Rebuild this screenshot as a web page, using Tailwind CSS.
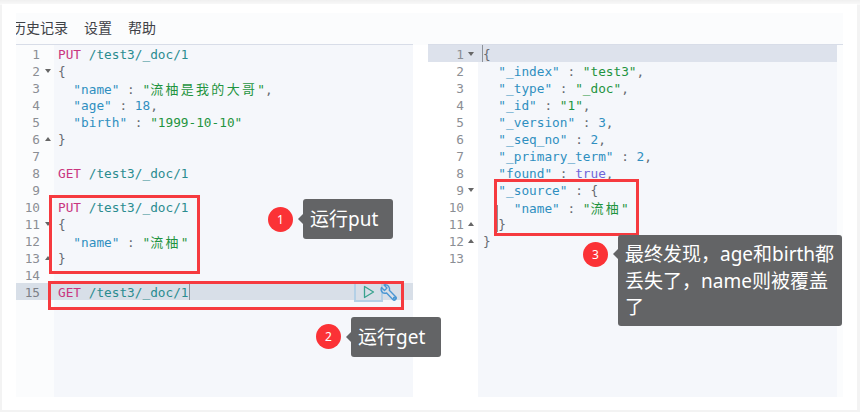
<!DOCTYPE html>
<html lang="zh-CN">
<head>
  <meta charset="UTF-8" />
  <title>Console</title>
  <script src="https://cdn.jsdelivr.net/npm/@tailwindcss/browser@4"></script>
</head>
<body>
  <div class="relative w-[860px] h-[412px] overflow-hidden bg-[#f3f3f3] font-['Noto_Sans','Noto_Sans_CJK_SC',sans-serif]">
    <div class="absolute inset-x-0 top-0 h-[5px] bg-gradient-to-b from-[#f0f0f0] to-[#fafafa]"></div>

    <!-- Panel -->
    <div class="absolute left-[2px] top-[4px] w-[855px] h-[406px] bg-white pt-[9px] px-[14px]">
      <!-- Toolbar -->
      <div class="h-[32px] bg-[#fbfcfd] overflow-hidden flex items-center gap-[16px] pb-[3px] text-[14px] text-[#3f4247]">
        <span class="-ml-[4px] font-['Noto_Sans_CJK_SC',sans-serif]">历史记录</span>
        <span class="font-['Noto_Sans_CJK_SC',sans-serif]">设置</span>
        <span class="font-['Noto_Sans_CJK_SC',sans-serif]">帮助</span>
      </div>

      <div class="flex h-[352px] font-['DejaVu_Sans_Mono',monospace] text-[12.75px] leading-[19px] text-[#666a70]">
        <!-- Request editor -->
        <div class="relative w-[397px] border-t border-[#d8dde8] -mt-px">
          <div class="absolute left-[38px] top-0 bottom-0 w-[359px] bg-[#f5f7fb]"></div>
          <div class="absolute left-0 top-0 bottom-0 w-[38px] bg-[#fbfcfd]"></div>
          <div class="relative">
            <div class="flex h-[17px]"><div class="w-[38px] pr-[14px] text-right text-[#8b8e94]">1</div><div class="pl-[4px] whitespace-pre"><span class="text-[#c9357f]">PUT</span> <span class="text-[#2a8c8f]">/test3/_doc/1</span></div></div>
            <div class="flex h-[17px]"><div class="relative w-[38px] pr-[14px] text-right text-[#8b8e94]">2<svg class="absolute right-[3px] top-[7px]" width="6" height="4" viewBox="0 0 6 4"><path d="M0 0h6L3 4z" fill="#666"/></svg></div><div class="pl-[4px] whitespace-pre">{</div></div>
            <div class="flex h-[17px]"><div class="w-[38px] pr-[14px] text-right text-[#8b8e94]">3</div><div class="pl-[4px] whitespace-pre">  <span class="text-[#2f8fc0]">"name"</span> : <span class="text-[#1f9440]">"<span class="font-['Noto_Sans_CJK_SC',sans-serif] text-[13px] tracking-[2.3px]">流柚是我的大哥</span>"</span>,</div></div>
            <div class="flex h-[17px]"><div class="w-[38px] pr-[14px] text-right text-[#8b8e94]">4</div><div class="pl-[4px] whitespace-pre">  <span class="text-[#2f8fc0]">"age"</span> : <span class="text-[#2f8fc0]">18</span>,</div></div>
            <div class="flex h-[17px]"><div class="w-[38px] pr-[14px] text-right text-[#8b8e94]">5</div><div class="pl-[4px] whitespace-pre">  <span class="text-[#2f8fc0]">"birth"</span> : <span class="text-[#1f9440]">"1999-10-10"</span></div></div>
            <div class="flex h-[17px]"><div class="relative w-[38px] pr-[14px] text-right text-[#8b8e94]">6<svg class="absolute right-[3px] top-[7px]" width="6" height="4" viewBox="0 0 6 4"><path d="M0 4h6L3 0z" fill="#666"/></svg></div><div class="pl-[4px] whitespace-pre">}</div></div>
            <div class="flex h-[17px]"><div class="w-[38px] pr-[14px] text-right text-[#8b8e94]">7</div></div>
            <div class="flex h-[17px]"><div class="w-[38px] pr-[14px] text-right text-[#8b8e94]">8</div><div class="pl-[4px] whitespace-pre"><span class="text-[#c9357f]">GET</span> <span class="text-[#2a8c8f]">/test3/_doc/1</span></div></div>
            <div class="flex h-[17px]"><div class="w-[38px] pr-[14px] text-right text-[#8b8e94]">9</div></div>
            <div class="flex h-[17px]"><div class="w-[38px] pr-[14px] text-right text-[#8b8e94]">10</div><div class="pl-[4px] whitespace-pre"><span class="text-[#c9357f]">PUT</span> <span class="text-[#2a8c8f]">/test3/_doc/1</span></div></div>
            <div class="flex h-[17px]"><div class="relative w-[38px] pr-[14px] text-right text-[#8b8e94]">11<svg class="absolute right-[3px] top-[7px]" width="6" height="4" viewBox="0 0 6 4"><path d="M0 0h6L3 4z" fill="#666"/></svg></div><div class="pl-[4px] whitespace-pre">{</div></div>
            <div class="flex h-[17px]"><div class="w-[38px] pr-[14px] text-right text-[#8b8e94]">12</div><div class="pl-[4px] whitespace-pre">  <span class="text-[#2f8fc0]">"name"</span> : <span class="text-[#1f9440]">"<span class="font-['Noto_Sans_CJK_SC',sans-serif] text-[13px] tracking-[2.3px]">流柚</span>"</span></div></div>
            <div class="flex h-[17px]"><div class="relative w-[38px] pr-[14px] text-right text-[#8b8e94]">13<svg class="absolute right-[3px] top-[7px]" width="6" height="4" viewBox="0 0 6 4"><path d="M0 4h6L3 0z" fill="#666"/></svg></div><div class="pl-[4px] whitespace-pre">}</div></div>
            <div class="flex h-[17px]"><div class="w-[38px] pr-[14px] text-right text-[#8b8e94]">14</div></div>
            <div class="flex h-[17px] bg-[#d8dfe8]"><div class="w-[38px] pr-[14px] text-right text-[#7d8087]">15</div><div class="pl-[4px] whitespace-pre"><span class="text-[#c9357f]">GET</span> <span class="text-[#2a8c8f]">/test3/_doc/1</span></div><div class="w-px h-[17px] bg-[#8d9299]"></div></div>
          </div>
        </div>

        <!-- Response viewer -->
        <div class="relative ml-[15px] w-[415px] border-t border-[#d8dde8] -mt-px bg-[#fbfcfd]">
          <div class="absolute left-[50px] top-0 bottom-0 w-[359px] bg-[#f5f7fb]"></div>
          <div class="absolute left-0 top-0 bottom-0 w-[50px] bg-white"></div>
          <div class="relative w-[409px]">
            <div class="flex h-[17px] bg-[#dde2ec]"><div class="relative w-[50px] pr-[14px] text-right text-[#8b8e94]">1<svg class="absolute right-[4px] top-[7px]" width="6" height="4" viewBox="0 0 6 4"><path d="M0 0h6L3 4z" fill="#666"/></svg></div><div class="w-px h-[17px] ml-[4px] bg-[#8d9299]"></div><div class="whitespace-pre">{</div></div>
            <div class="flex h-[17px]"><div class="w-[50px] pr-[14px] text-right text-[#8b8e94]">2</div><div class="pl-[5px] whitespace-pre">  <span class="text-[#2f8fc0]">"_index"</span> : <span class="text-[#1f9440]">"test3"</span>,</div></div>
            <div class="flex h-[17px]"><div class="w-[50px] pr-[14px] text-right text-[#8b8e94]">3</div><div class="pl-[5px] whitespace-pre">  <span class="text-[#2f8fc0]">"_type"</span> : <span class="text-[#1f9440]">"_doc"</span>,</div></div>
            <div class="flex h-[17px]"><div class="w-[50px] pr-[14px] text-right text-[#8b8e94]">4</div><div class="pl-[5px] whitespace-pre">  <span class="text-[#2f8fc0]">"_id"</span> : <span class="text-[#1f9440]">"1"</span>,</div></div>
            <div class="flex h-[17px]"><div class="w-[50px] pr-[14px] text-right text-[#8b8e94]">5</div><div class="pl-[5px] whitespace-pre">  <span class="text-[#2f8fc0]">"_version"</span> : <span class="text-[#2f8fc0]">3</span>,</div></div>
            <div class="flex h-[17px]"><div class="w-[50px] pr-[14px] text-right text-[#8b8e94]">6</div><div class="pl-[5px] whitespace-pre">  <span class="text-[#2f8fc0]">"_seq_no"</span> : <span class="text-[#2f8fc0]">2</span>,</div></div>
            <div class="flex h-[17px]"><div class="w-[50px] pr-[14px] text-right text-[#8b8e94]">7</div><div class="pl-[5px] whitespace-pre">  <span class="text-[#2f8fc0]">"_primary_term"</span> : <span class="text-[#2f8fc0]">2</span>,</div></div>
            <div class="flex h-[17px]"><div class="w-[50px] pr-[14px] text-right text-[#8b8e94]">8</div><div class="pl-[5px] whitespace-pre">  <span class="text-[#2f8fc0]">"found"</span> : <span class="text-[#6f66d9]">true</span>,</div></div>
            <div class="flex h-[17px]"><div class="relative w-[50px] pr-[14px] text-right text-[#8b8e94]">9<svg class="absolute right-[4px] top-[7px]" width="6" height="4" viewBox="0 0 6 4"><path d="M0 0h6L3 4z" fill="#666"/></svg></div><div class="pl-[5px] whitespace-pre">  <span class="text-[#2f8fc0]">"_source"</span> : {</div></div>
            <div class="flex h-[17px]"><div class="w-[50px] pr-[14px] text-right text-[#8b8e94]">10</div><div class="pl-[5px] whitespace-pre">    <span class="text-[#2f8fc0]">"name"</span> : <span class="text-[#1f9440]">"<span class="font-['Noto_Sans_CJK_SC',sans-serif] text-[13px] tracking-[2.3px]">流柚</span>"</span></div></div>
            <div class="flex h-[17px]"><div class="relative w-[50px] pr-[14px] text-right text-[#8b8e94]">11<svg class="absolute right-[4px] top-[7px]" width="6" height="4" viewBox="0 0 6 4"><path d="M0 4h6L3 0z" fill="#666"/></svg></div><div class="pl-[5px] whitespace-pre">  }</div></div>
            <div class="flex h-[17px]"><div class="relative w-[50px] pr-[14px] text-right text-[#8b8e94]">12<svg class="absolute right-[4px] top-[7px]" width="6" height="4" viewBox="0 0 6 4"><path d="M0 4h6L3 0z" fill="#666"/></svg></div><div class="pl-[5px] whitespace-pre">}</div></div>
            <div class="flex h-[17px]"><div class="w-[50px] pr-[14px] text-right text-[#8b8e94]">13</div></div>
          </div>
        </div>
      </div>
    </div>

    <!-- Bracket match guide in the response -->
    <div class="absolute left-[497px] top-[205px] w-px h-[27px] bg-[#8d9299]"></div>

    <!-- Action icons on line 15 -->
    <div class="absolute left-[354px] top-[281px] w-[29px] h-[21px] border-2 border-[#b4d0e6] flex items-center justify-center">
      <svg width="12" height="14" viewBox="0 0 12 14" fill="none"><path d="M1.5 1.5v11L10.5 7z" stroke="#3aa38f" stroke-width="1.3" stroke-linejoin="round"/></svg>
    </div>
    <svg class="absolute left-[380px] top-[284px]" width="19" height="19" viewBox="0 0 19 19" fill="none" stroke="#4a97d4" stroke-width="1.4" stroke-linejoin="round">
      <path d="M4 1 7 4 4.500 6.500 1.500 3.500C.4 6.200 1.800 9.200 4.800 9.300c.7 0 1.300-.1 1.800-.4l6.200 6.500c1.800 1.900 4.700-.7 2.900-2.700L9.300 6.300c.3-.8.300-1.700 0-2.500C8.500 1.400 6 .3 4 1z"/>
      <circle cx="14.500" cy="14.300" r="1"/>
    </svg>

    <!-- Red marker boxes -->
    <div class="absolute left-[49px] top-[195px] w-[151px] h-[79px] border-[3px] border-[#f63a3f]"></div>
    <div class="absolute left-[48px] top-[281px] w-[356px] h-[29px] border-[3px] border-[#f63a3f]"></div>
    <div class="absolute left-[494px] top-[179px] w-[145px] h-[57px] border-[3px] border-[#f63a3f]"></div>

    <!-- Callout 1 -->
    <div class="absolute left-[268px] top-[207px] w-[25px] h-[25px] rounded-full bg-[#fb3236] text-white text-[12px] flex items-center justify-center">1</div>
    <div class="absolute left-[303px] top-[199px] w-[90px] h-[40px] rounded-[3px] bg-[#636466] text-white text-[19px] pl-[7px] leading-[40px]"><span class="absolute -left-[5px] top-[15px] w-0 h-0 border-y-[5px] border-y-transparent border-r-[5px] border-r-[#636466]"></span>运行put</div>

    <!-- Callout 2 -->
    <div class="absolute left-[316px] top-[324px] w-[25px] h-[25px] rounded-full bg-[#fb3236] text-white text-[12px] flex items-center justify-center">2</div>
    <div class="absolute left-[351px] top-[317px] w-[90px] h-[40px] rounded-[3px] bg-[#636466] text-white text-[19px] pl-[7px] leading-[40px]"><span class="absolute -left-[5px] top-[15px] w-0 h-0 border-y-[5px] border-y-transparent border-r-[5px] border-r-[#636466]"></span>运行get</div>

    <!-- Callout 3 -->
    <div class="absolute left-[583px] top-[242px] w-[25px] h-[25px] rounded-full bg-[#fb3236] text-white text-[12px] flex items-center justify-center">3</div>
    <div class="absolute left-[618px] top-[235px] w-[224px] h-[91px] rounded-[3px] bg-[#636466] text-white text-[19px] pl-[7px] pr-[5px] pt-[6px] leading-[26.500px]"><span class="absolute -left-[5px] top-[14px] w-0 h-0 border-y-[5px] border-y-transparent border-r-[5px] border-r-[#636466]"></span>最终发现，age和birth都丢失了，name则被覆盖了</div>
  </div>
</body>
</html>
